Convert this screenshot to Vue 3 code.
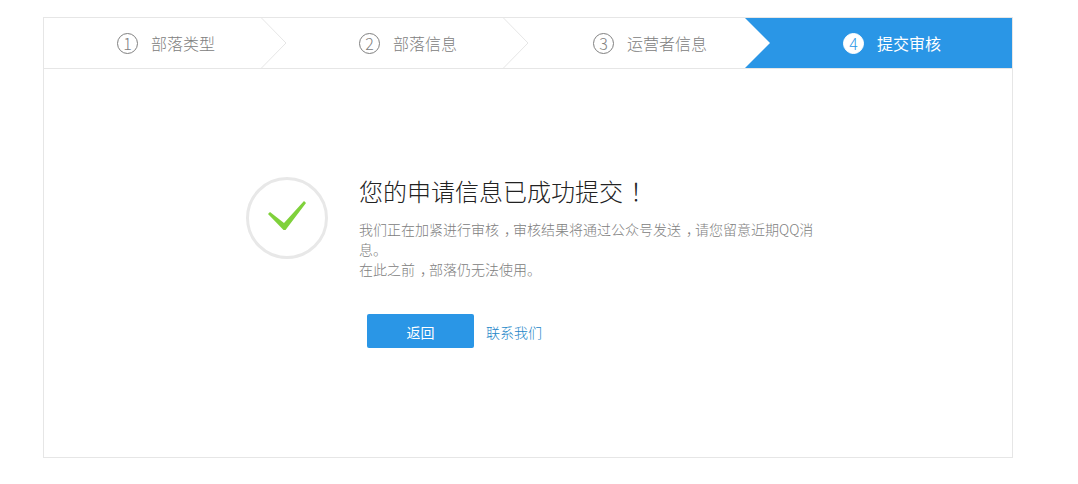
<script setup>
const steps = [
  { num: '1', label: '部落类型' },
  { num: '2', label: '部落信息' },
  { num: '3', label: '运营者信息' },
  { num: '4', label: '提交审核', active: true }
]
</script>

<template>
  <div class="page">
    <div class="panel">
      <div class="steps">
        <div v-for="(s, i) in steps" :key="s.num" class="step" :class="{ active: s.active }">
          <svg v-if="s.active" class="notch" width="26" height="50" viewBox="0 0 26 50">
            <polygon points="0,0 26,0 26,50 0,50 25,25" fill="#2a96e6" />
          </svg>
          <span class="num">{{ s.num }}</span>
          <span class="label">{{ s.label }}</span>
          <svg v-if="i < 2" class="chevron" width="26" height="50" viewBox="0 0 26 50">
            <polyline points="0.5,0 25,25 0.5,50" fill="none" stroke="#e6e6e6" stroke-width="1" />
          </svg>
        </div>
      </div>
      <div class="result">
        <div class="icon">
          <svg class="check" width="40" height="32" viewBox="0 0 40 32">
            <polygon points="1,14 3,12 17,23 37,1 39,3 18.5,30 16.5,30" fill="#7fd13b" />
          </svg>
        </div>
        <div class="content">
          <h1 class="title">您的申请信息已成功提交<span class="mark">！</span></h1>
          <p class="desc">我们正在加紧进行审核<span class="comma">，</span>审核结果将通过公众号发送<span class="comma">，</span>请您留意近期QQ消<br />息。<br />在此之前<span class="comma">，</span>部落仍无法使用。</p>
          <div class="actions">
            <button class="back" type="button">返回</button>
            <a class="contact" href="#">联系我们</a>
          </div>
        </div>
      </div>
    </div>
  </div>
</template>

<style scoped>
.page {
  padding: 17px 0 26px 43px;
  font-family: "Noto Sans CJK SC", "Liberation Sans", sans-serif;
  font-weight: 300;
}
.panel {
  width: 970px;
  height: 441px;
  box-sizing: border-box;
  border: 1px solid #e6e6e6;
  background: #fff;
}
.steps {
  display: grid;
  grid-template-columns: repeat(4, 1fr);
  height: 50px;
  border-bottom: 1px solid #e6e6e6;
}
.step {
  position: relative;
  display: flex;
  align-items: center;
  justify-content: center;
  gap: 13px;
  padding-left: 2px;
  color: #808080;
  font-size: 16px;
}
.step.active {
  background: #2a96e6;
  color: #fff;
  font-weight: 400;
}
.chevron {
  position: absolute;
  right: -1px;
  top: 0;
}
.notch {
  position: absolute;
  left: -25px;
  top: 0;
}
.num {
  width: 19px;
  height: 19px;
  border: 1px solid #808080;
  border-radius: 50%;
  display: flex;
  align-items: center;
  justify-content: center;
  font-size: 16px;
  font-weight: 300;
  line-height: 1;
}
.active .num {
  background: #fff;
  border-color: #fff;
  color: #2a96e6;
}
.result {
  display: flex;
  align-items: flex-start;
  gap: 31px;
  padding: 108px 0 0 202px;
}
.icon {
  width: 76px;
  height: 76px;
  border: 3px solid #e8e8e8;
  border-radius: 50%;
  display: flex;
  align-items: center;
  justify-content: center;
  flex: none;
}
.check {
  margin-bottom: 4px;
}
.content {
  width: 460px;
}
.title {
  margin: 0;
  font-size: 24px;
  line-height: 28px;
  font-weight: 300;
  color: #222;
}
.mark {
  font-feature-settings: "halt";
  padding: 0 5px 0 7px;
}
.comma {
  font-feature-settings: "halt";
  padding: 0 2px 0 5px;
}
.desc {
  margin: 14px 0 0;
  font-size: 14px;
  line-height: 20px;
  color: #808080;
}
.actions {
  display: flex;
  align-items: center;
  gap: 12px;
  margin: 35px 0 0 8px;
}
.back {
  width: 107px;
  height: 34px;
  border: 0;
  border-radius: 2px;
  padding: 2px 0 0;
  background: #2a96e6;
  color: #fff;
  font: inherit;
  font-size: 14px;
  font-weight: 400;
}
.contact {
  padding-top: 2px;
  font-size: 14px;
  color: #2386c8;
  text-decoration: none;
}
</style>
